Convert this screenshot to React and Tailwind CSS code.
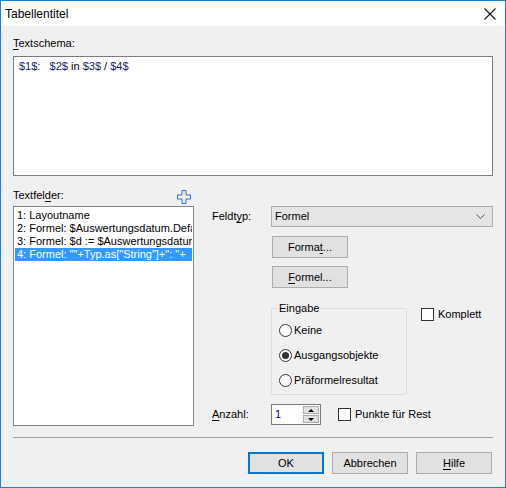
import React from 'react';

const U = ({ children }) => <span className="underline underline-offset-2">{children}</span>;

function Btn({ children, primary, className = '' }) {
  return (
    <div
      className={`h-[22px] w-[76px] flex items-center justify-center bg-[#e1e1e1] text-[11px] text-black ${
        primary ? 'border-2 border-[#0078d7]' : 'border border-[#adadad]'
      } ${className}`}
    >
      {children}
    </div>
  );
}

function Check({ label }) {
  return (
    <div className="flex items-center gap-[4px]">
      <div className="w-[13px] h-[13px] border border-[#333] bg-white" />
      <span className="text-[11px] leading-[13px]">{label}</span>
    </div>
  );
}

function Radio({ label, checked }) {
  return (
    <div className="flex items-center gap-[2px] h-[13px]">
      <div className="w-[13px] h-[13px] rounded-full border border-[#333] bg-white flex items-center justify-center">
        {checked && <div className="w-[7px] h-[7px] rounded-full bg-[#333]" />}
      </div>
      <span className="text-[11px] leading-[13px]">{label}</span>
    </div>
  );
}

const ITEMS = [
  '1: Layoutname',
  '2: Formel: $Auswertungsdatum.Default',
  '3: Formel: $d := $Auswertungsdatum',
  '4: Formel: ""+Typ.as["String"]+": "+',
];

export default function App() {
  return (
    <div className="w-[506px] h-[488px] border border-[#1883d7] flex flex-col font-['Liberation_Sans',Arial,sans-serif] text-black overflow-hidden">
      {/* title bar */}
      <div className="h-[25px] bg-white flex items-center justify-between pl-[4px] pr-[9px]">
        <span className="text-[12px]">Tabellentitel</span>
        <svg width="12" height="12" viewBox="0 0 12 12">
          <path d="M0.5 0.5 L11.5 11.5 M11.5 0.5 L0.5 11.5" stroke="#111" strokeWidth="1.1" />
        </svg>
      </div>

      <div className="flex-1 bg-[#f0f0f0] px-[12px] pt-[10px] text-[11px]">
        <div className="leading-[15px]"><U>T</U>extschema:</div>
        <div className="mt-[5px] h-[120px] border border-[#7a7a7a] bg-white px-[5px] pt-[2px] leading-[15px] whitespace-pre">
          <span className="text-[#16226e]">$1$:</span>{'   '}
          <span className="text-[#16226e]">$2$</span> in <span className="text-[#16226e]">$3$</span> / <span className="text-[#16226e]">$4$</span>
        </div>

        <div className="flex mt-[12px]">
          {/* left list */}
          <div className="w-[181px] flex flex-col">
            <div className="flex items-center justify-between h-[15px] leading-[15px]">
              <span>Textfel<U>d</U>er:</span>
              <svg width="14" height="14" viewBox="0 0 14 14" className="mr-[3px] mt-[2px]">
                <path d="M5 0.5 H9 V5 H13.5 V9 H9 V13.5 H5 V9 H0.5 V5 H5 Z" fill="none" stroke="#2f6fd6" strokeWidth="1" />
              </svg>
            </div>
            <div className="mt-[3px] h-[220px] border border-[#828790] bg-white pt-[2px] px-[1px] overflow-hidden">
              {ITEMS.map((t, i) => (
                <div
                  key={i}
                  className={`h-[13px] leading-[13px] pl-[2px] whitespace-nowrap overflow-hidden ${
                    i === 3 ? 'bg-[#3399ff] text-white' : ''
                  }`}
                >
                  {t}
                </div>
              ))}
            </div>
          </div>

          {/* right column */}
          <div className="ml-[18px] flex-1 flex flex-col pt-[18px]">
            <div className="flex items-center">
              <span className="w-[59px]">Feldt<U>y</U>p:</span>
              <div className="w-[222px] h-[21px] border border-[#adadad] bg-[#e5e5e5] flex items-center justify-between pl-[3px] pr-[7px]">
                <span>Formel</span>
                <svg width="9" height="6" viewBox="0 0 9 6">
                  <path d="M0.5 0.5 L4.5 4.5 L8.5 0.5" fill="none" stroke="#555" strokeWidth="1" />
                </svg>
              </div>
            </div>
            <Btn className="ml-[60px] mt-[9px]">Forma<U>t</U>...</Btn>
            <Btn className="ml-[60px] mt-[8px]">
              <span><U>F</U>ormel...</span>
            </Btn>

            <div className="flex mt-[20px]">
              <div className="relative ml-[59px] w-[136px] h-[87px] border border-[#dcdcdc] rounded-[2px] pl-[7px] pt-[15px] flex flex-col gap-[12px]">
                <span className="absolute -top-[8px] left-[6px] px-[1px] bg-[#f0f0f0] leading-[15px]">Eingabe</span>
                <Radio label="Keine" />
                <Radio label="Ausgangsobjekte" checked />
                <Radio label="Präformelresultat" />
              </div>
              <div className="ml-[14px] mt-[0px]">
                <Check label="Komplett" />
              </div>
            </div>

            <div className="flex items-center mt-[9px]">
              <span className="w-[59px]"><U>A</U>nzahl:</span>
              <div className="w-[50px] h-[21px] border border-[#7a7a7a] bg-white flex items-center justify-between pl-[3px] pr-[1px]">
                <span className="text-[#000080]">1</span>
                <div className="flex flex-col gap-[1px]">
                  <div className="w-[16px] h-[8px] bg-[#e1e1e1] border border-[#adadad] flex items-center justify-center">
                    <svg width="6" height="3" viewBox="0 0 6 3"><path d="M3 0 L6 3 L0 3 Z" fill="#000" /></svg>
                  </div>
                  <div className="w-[16px] h-[8px] bg-[#e1e1e1] border border-[#adadad] flex items-center justify-center">
                    <svg width="6" height="3" viewBox="0 0 6 3"><path d="M0 0 L6 0 L3 3 Z" fill="#000" /></svg>
                  </div>
                </div>
              </div>
              <div className="ml-[17px]">
                <Check label="Punkte für Rest" />
              </div>
            </div>
          </div>
        </div>

        <div className="mt-[11px] h-px bg-[#a0a0a0]" />

        <div className="flex justify-end gap-[8px] mt-[14px] pr-[1px]">
          <Btn primary>OK</Btn>
          <Btn>Abbrechen</Btn>
          <Btn><span><U>H</U>ilfe</span></Btn>
        </div>
      </div>
    </div>
  );
}
